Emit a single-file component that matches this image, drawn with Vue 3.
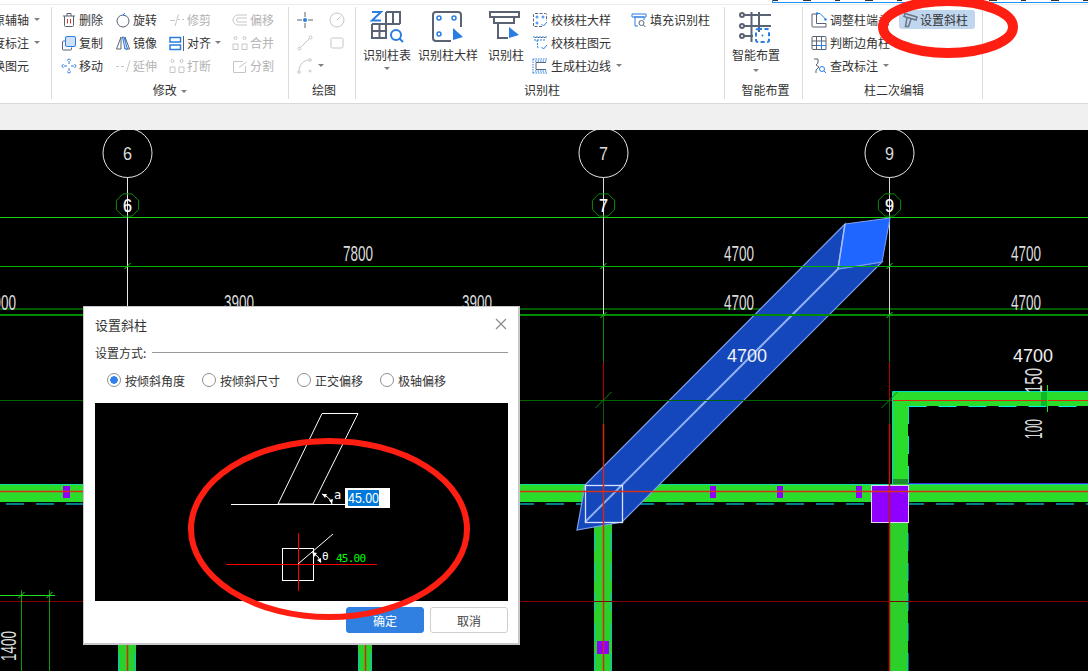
<template>
  <div class="app">
    <div class="top-strip"><div class="top-tabs"></div></div>

    <div class="ribbon">
      <section class="group g0">
        <div class="body rows cut">
          <div class="item"><span>原辅轴</span><i class="caret"></i></div>
          <div class="item"><span>度标注</span><i class="caret"></i></div>
          <div class="item"><span>换图元</span></div>
        </div>
      </section>

      <section class="group g1">
        <div class="body rows">
          <div class="item">
            <svg class="ic" viewBox="0 0 16 16"><path d="M2 4h12M6 4V1.500h4V4M3.500 4v9.500a1 1 0 0 0 1 1h7a1 1 0 0 0 1-1V4" /><path class="red" d="M6.500 7v4.500M9.500 7v4.500" /></svg>
            <span>删除</span>
          </div>
          <div class="item">
            <svg class="ic" viewBox="0 0 16 16"><circle cx="8" cy="9" r="6" /><path class="blue" d="M8 3l2-2M8 3l2.500 1" /></svg>
            <span>旋转</span>
          </div>
          <div class="item off">
            <svg class="ic" viewBox="0 0 16 16"><path d="M1 8.500h5M9 7.500h2M13 7.500h2M9.500 2.500L6 14" /></svg>
            <span>修剪</span>
          </div>
          <div class="item off">
            <svg class="ic" viewBox="0 0 16 16"><path d="M15 3H6a5 5 0 0 0 0 10h9M15 6H6.500a2 2 0 0 0 0 4H15" /></svg>
            <span>偏移</span>
          </div>

          <div class="item">
            <svg class="ic" viewBox="0 0 16 16"><path d="M4 6H2.500a1 1 0 0 0-1 1v7a1 1 0 0 0 1 1h7a1 1 0 0 0 1-1v-1.500" /><rect class="blue tint" x="4.500" y="1.500" width="10" height="10" rx="1.500" /></svg>
            <span>复制</span>
          </div>
          <div class="item">
            <svg class="ic" viewBox="0 0 16 16"><path d="M6 2L1.500 14h4.500zM10 2v12h4.500z" /><path class="blue tint" d="M7.500 2L10 14h2.500L9 2z" /></svg>
            <span>镜像</span>
          </div>
          <div class="item">
            <svg class="ic" viewBox="0 0 16 16"><path class="blue wide" d="M1 2.500h10.500v4.500H1zM1 10h10.500v4.500H1z" /><path d="M14.500 1v15" /></svg>
            <span>对齐</span><i class="caret"></i>
          </div>
          <div class="item off">
            <svg class="ic" viewBox="0 0 16 16"><circle cx="3.500" cy="3" r="1.500" /><circle cx="12.500" cy="3" r="1.500" /><path d="M1 14.500V9h5v5.500zM10 14.500V9h5v5.500z" /></svg>
            <span>合并</span>
          </div>

          <div class="item">
            <svg class="ic" viewBox="0 0 16 16"><path class="blue" d="M8 3v3M8 10v3M3 8h3M10 8h3M6 2.500L8 .8l2 1.700M6 13.500l2 1.700 2-1.700M2.500 6L.8 8l1.700 2M13.500 6L15.200 8l-1.700 2" /></svg>
            <span>移动</span>
          </div>
          <div class="item off">
            <svg class="ic" viewBox="0 0 16 16"><path d="M1 8.500h3M6 8.500h3M15 2.500L11.500 14" /></svg>
            <span>延伸</span>
          </div>
          <div class="item off">
            <svg class="ic" viewBox="0 0 16 16"><circle cx="3.500" cy="3" r="1.500" /><circle cx="12.500" cy="3" r="1.500" /><path d="M1 14.500V9h5v5.500zM10 14.500V9h5v5.500z" /></svg>
            <span>打断</span>
          </div>
          <div class="item off">
            <svg class="ic" viewBox="0 0 16 16"><path d="M11 3.500H1.500v11h12V8M7 9.500L14.500 4" /></svg>
            <span>分割</span>
          </div>
        </div>
        <div class="label">修改 <i class="caret"></i></div>
      </section>

      <section class="group g2">
        <div class="body rows">
          <div class="item">
            <svg class="ic" viewBox="0 0 16 16"><path d="M0 8h5M11 8h5M8 0v5M8 11v5" /><circle class="dot" cx="8" cy="8" r="2" /></svg>
          </div>
          <div class="item off">
            <svg class="ic" viewBox="0 0 16 16"><circle cx="8" cy="8" r="7" /><path d="M8 8l3.500-3.500" /></svg>
          </div>
          <div class="item off">
            <svg class="ic" viewBox="0 0 16 16"><circle cx="2.500" cy="13.500" r="1.500" /><circle cx="13.500" cy="2.500" r="1.500" /><path d="M3.500 12.500l9-9" /></svg>
          </div>
          <div class="item off">
            <svg class="ic" viewBox="0 0 16 16"><rect x="2" y="3" width="12" height="10" rx="1.500" /></svg>
          </div>
          <div class="item off">
            <svg class="ic" viewBox="0 0 16 16"><circle cx="2" cy="14" r="1.300" /><circle cx="13" cy="2" r="1.300" /><circle cx="13" cy="13" r="1" /><path d="M2 12.500C2.500 6 7 2.500 11.500 2" /></svg>
            <i class="caret"></i>
          </div>
        </div>
        <div class="label">绘图</div>
      </section>

      <section class="group g3">
        <div class="body big-row">
          <div class="big b1">
            <svg class="ic big-ic" viewBox="0 0 34 34"><path class="blue" d="M2 2h9L2 10.500h9" /><path d="M16 2h14v12M23 2v12M2 14h28M2 14v14h15M9.500 14v14M2 21h15M16 2v26" /><circle class="blue" cx="26" cy="25" r="5" /><path class="blue" d="M29.500 28.500L33 32" /></svg>
            <span>识别柱表</span>
            <i class="caret"></i>
          </div>
          <div class="big b2">
            <svg class="ic big-ic" viewBox="0 0 34 34"><path d="M20 31H5a3 3 0 0 1-3-3V5a3 3 0 0 1 3-3h22a3 3 0 0 1 3 3v12" /><g class="thin"><circle class="blue" cx="8" cy="8" r="2" /><circle class="blue" cx="23" cy="8" r="2" /><circle class="blue" cx="8" cy="24" r="2" /></g><path class="fill" d="M22 18l10 9-10 3z" /></svg>
            <span>识别柱大样</span>
          </div>
          <div class="big b3">
            <svg class="ic big-ic" viewBox="0 0 34 34"><path d="M1 2h29v5H1zM5 7v6h20V7M9 13v15h10" /><path class="fill" d="M20 17l10 8-10 3z" /></svg>
            <span>识别柱</span>
          </div>
          <div class="rows col3">
            <div class="item">
              <svg class="ic" viewBox="0 0 16 16"><path stroke-dasharray="3 1.500" d="M1.500 14V2.500a1 1 0 0 1 1-1h11a1 1 0 0 1 1 1V9M10 14.500H2.500" /><circle class="blue" cx="5" cy="5" r="1" /><circle class="blue" cx="11" cy="5" r="1" /><circle class="blue" cx="5" cy="11" r="1" /><path class="blue" d="M9.500 12l2 2L15 10" /></svg>
              <span>校核柱大样</span>
            </div>
            <div class="item">
              <svg class="ic" viewBox="0 0 16 16"><path class="blue" stroke-dasharray="2 1" d="M1 2h14M2 5h12M5 5l1 9" /><path d="M3 2.500h10" stroke-dasharray="1.500 1.500" /><path class="blue" d="M9.500 12l2 2L15 10" /></svg>
              <span>校核柱图元</span>
            </div>
            <div class="item">
              <svg class="ic" viewBox="0 0 16 16"><path class="blue" stroke-dasharray="1.500 1" d="M1 1h14M1 15h14M1 1v14M3 3h12M3 13h12" /><path d="M4 4.500h10M4 11.500h10M4 4.500v7" /></svg>
              <span>生成柱边线</span><i class="caret"></i>
            </div>
          </div>
          <div class="rows col4">
            <div class="item">
              <svg class="ic" viewBox="0 0 16 16"><path class="blue" d="M1 2h14v3H1zM3 5h10v3" /><path class="blue" d="M4 5v9h3" /><circle cx="10.500" cy="11" r="2.500" /><path d="M12.500 13l2 2" /></svg>
              <span>填充识别柱</span>
            </div>
          </div>
        </div>
        <div class="label">识别柱</div>
      </section>

      <section class="group g4">
        <div class="body smart">
          <svg class="ic big-ic" viewBox="0 0 34 34"><path d="M12.500 2v30M20 2v20M4 5h28M4 16h28M4 26h10" /><circle cx="3" cy="5" r="2" /><circle cx="3" cy="16" r="2" /><circle cx="3" cy="26" r="2" /><rect class="blue" stroke-dasharray="4 2.500" x="17" y="19" width="13" height="13" rx="2" /><circle class="dot" cx="23.500" cy="25.500" r="1" /></svg>
          <span>智能布置</span>
          <i class="caret"></i>
        </div>
        <div class="label">智能布置</div>
      </section>

      <section class="group g5">
        <div class="body rows">
          <div class="item">
            <svg class="ic" viewBox="0 0 16 16"><path d="M1 2h4.500v9.500H15V15H2a1 1 0 0 1-1-1z" /><path class="blue" d="M6 1.500h3L14.500 7" /><circle class="dot" cx="6" cy="1.500" r="1.200" /><circle class="dot" cx="14.500" cy="7.500" r="1.200" /></svg>
            <span>调整柱端头</span>
          </div>
          <div class="item on">
            <svg class="ic slant" viewBox="0 0 16 16"><path d="M2 1.500l12 3.500-1 3L1 4.500zM4 5.500L2.500 14.500h3L8 7" /></svg>
            <span>设置斜柱</span>
          </div>
          <div class="item">
            <svg class="ic" viewBox="0 0 16 16"><path d="M1 2.500a1 1 0 0 1 1-1h12a1 1 0 0 1 1 1v12H2a1 1 0 0 1-1-1zM1 6h14M1 10.500h14M5.500 1.500v13M10.500 1.500v13" /><path class="blue" d="M10.500 6v8.500M6 10.500h9" /></svg>
            <span>判断边角柱</span>
          </div>
          <div></div>
          <div class="item">
            <svg class="ic" viewBox="0 0 16 16"><path d="M3 1h4v4L5 7l3 2-3 3v3" /><circle class="blue" cx="11" cy="11" r="2.500" /><path class="blue" d="M13 13l2 2" /></svg>
            <span>查改标注</span><i class="caret"></i>
          </div>
        </div>
        <div class="label">柱二次编辑</div>
      </section>
    </div>

    <div class="band"></div>

    <div class="canvas">
      <svg class="plan" viewBox="0 130 1088 541" width="1088" height="541">
        <!-- grid behind the beams -->
        <line v-for="(l, i) in backLines" :key="'b' + i" :x1="l[0]" :y1="l[1]" :x2="l[2]" :y2="l[3]" :stroke="l[4]" :stroke-width="l[5]" shape-rendering="crispEdges" />

        <!-- walls -->
        <rect x="0" y="485" width="1088" height="17" fill="#2bdd2b" />
        <line x1="0" y1="484.500" x2="1088" y2="484.500" stroke="#10dca0" />
        <line x1="0" y1="504" x2="1088" y2="504" stroke="#007f8a" stroke-width="2" stroke-dasharray="18 12" stroke-dashoffset="-6" />
        <rect x="594" y="502" width="18" height="169" fill="#2bd02b" />
        <rect x="118" y="645" width="18" height="26" fill="#2bd02b" />
        <rect x="358" y="645" width="14" height="26" fill="#2bd02b" />
        <rect x="890" y="502" width="18" height="169" fill="#2bd02b" />
        <rect x="892" y="392" width="16" height="93" fill="#2bdd2b" />
        <rect x="892" y="392" width="196" height="14" fill="#2bdd2b" />
        <path d="M892.500 484V391.500H1088" fill="none" stroke="#00d8c8" />
        <line x1="908.500" y1="406.500" x2="1088" y2="406.500" stroke="#00f0f0" stroke-dasharray="18 12" />
        <line x1="908.500" y1="406" x2="908.500" y2="484" stroke="#00e0e0" stroke-dasharray="18 12" />
        <line x1="908" y1="483.500" x2="1088" y2="483.500" stroke="#3a30e0" />
        <rect x="893" y="479" width="15" height="5" fill="#1d8f2f" />
        <line v-for="x in wallEdges" :key="'e' + x" :x1="x" y1="503" :x2="x" y2="671" stroke="#00c8d8" stroke-width="1" stroke-dasharray="18 12" />
        <rect x="1041" y="392" width="7" height="14" fill="#12b82c" />

        <!-- columns -->
        <rect v-for="p in studs" :key="p[0] + '-' + p[1]" :x="p[0]" :y="p[1]" :width="p[2]" :height="p[3]" fill="#8f00ff" />
        <rect x="871.500" y="485.500" width="37" height="37" fill="#8f00ff" stroke="#e4d8f4" />

        <!-- inclined column -->
        <polygon points="845,224 585,485 577,530 622,522 882,262 838,269" fill="#1347bb" stroke="#7fa0ee" stroke-width="1.200" />
        <polygon points="845,224 890,218 882,262 838,269" fill="#1e66ff" stroke="#7ea0f5" />
        <line x1="838" y1="269" x2="585" y2="522" stroke="#8fb0f0" stroke-width="2" />
        <line x1="845" y1="224" x2="838" y2="269" stroke="#a5bcf7" stroke-width="1.500" />
        <rect x="585.500" y="485.500" width="37" height="37" fill="none" stroke="#d8e2fa" stroke-width="1.300" />

        <!-- red axis lines -->
        <line v-for="(l, i) in redLines" :key="'r' + i" :x1="l[0]" :y1="l[1]" :x2="l[2]" :y2="l[3]" :stroke="l[4]" :stroke-width="l[5]" />

        <line v-for="(l, i) in frontLines" :key="'f' + i" :x1="l[0]" :y1="l[1]" :x2="l[2]" :y2="l[3]" :stroke="l[4]" :stroke-width="l[5]" shape-rendering="crispEdges" />
        <line v-for="(t, i) in ticks" :key="'t' + i" :x1="t[0] - t[2]" :y1="t[1] + t[2]" :x2="t[0] + t[2]" :y2="t[1] - t[2]" :stroke="t[3]" />

        <!-- axis bubbles -->
        <g v-for="a in axes" :key="a.x">
          <circle :cx="a.x" cy="153" r="24.500" fill="#000" stroke="#e8e8e8" />
          <text class="cad" :x="a.x - 4.500" y="160" font-size="19" textLength="9" lengthAdjust="spacingAndGlyphs">{{ a.n }}</text>
          <polygon :points="octagon(a.x, 205, 12)" fill="none" stroke="#0b8a0b" />
          <text class="cad bold" :x="a.x - 4.500" y="212" font-size="19" textLength="9" lengthAdjust="spacingAndGlyphs">{{ a.n }}</text>
        </g>

        <!-- dimensions -->
        <text v-for="d in dims" :key="d[0] + '-' + d[1]" class="cad" :x="d[0]" :y="d[1]" font-size="22" textLength="30" lengthAdjust="spacingAndGlyphs">{{ d[2] }}</text>
        <text class="big-dim" x="727" y="362" font-size="19" textLength="40" lengthAdjust="spacingAndGlyphs">4700</text>
        <text class="big-dim" x="1013" y="362" font-size="19" textLength="40" lengthAdjust="spacingAndGlyphs">4700</text>
        <text class="cad" transform="translate(1042 393) rotate(-90)" font-size="24" textLength="25" lengthAdjust="spacingAndGlyphs">150</text>
        <text class="cad" transform="translate(1042 439) rotate(-90)" font-size="24" textLength="20" lengthAdjust="spacingAndGlyphs">100</text>
        <text class="cad" transform="translate(16 661) rotate(-90)" font-size="22" textLength="30" lengthAdjust="spacingAndGlyphs">1400</text>
      </svg>

      <div class="dialog">
        <div class="dlg-head">
          <span>设置斜柱</span>
          <svg class="close" viewBox="0 0 12 12"><path d="M1 1l10 10M11 1L1 11" /></svg>
        </div>
        <div class="legend"><span>设置方式:</span><i></i></div>
        <div class="radios">
          <label v-for="(r, i) in modes" :key="r" class="radio"><b :class="{ picked: i === 0 }"></b>{{ r }}</label>
        </div>
        <svg class="preview" viewBox="95 403 413 198" width="413" height="198">
          <path d="M322 413.500h36L313 504h-35zM231 504.500h114" fill="none" stroke="#fff" />
          <path d="M322 494q8 3 10 10" fill="none" stroke="#fff" />
          <path d="M322 494l5 0-2 4zM332 504l-3-4 4-1z" fill="#fff" />
          <text class="mono" x="334" y="499" font-size="12" fill="#fff">a</text>
          <rect x="345" y="488" width="45" height="20" fill="#fff" />
          <rect x="348" y="490" width="31" height="16" fill="#0078d7" />
          <text x="348" y="503" font-size="14" fill="#fff" class="inp" textLength="31" lengthAdjust="spacingAndGlyphs">45.00</text>

          <rect x="282.500" y="548.500" width="31" height="32" fill="none" stroke="#fff" />
          <line x1="226" y1="564.500" x2="377" y2="564.500" stroke="#ff0000" stroke-width="1" />
          <line x1="298.500" y1="533" x2="298.500" y2="591" stroke="#ff0000" stroke-width="1" />
          <path d="M298 564l35-30" stroke="#fff" fill="none" />
          <path d="M313 553q6 3 8 9" fill="none" stroke="#fff" />
          <path d="M312 552l5 1-3 4zM321 563l-4-3 4-2z" fill="#fff" />
          <text class="mono" x="322" y="560" font-size="11" fill="#fff">θ</text>
          <text class="mono" x="336" y="562" font-size="11" fill="#0f0" textLength="30">45.00</text>
        </svg>
        <div class="actions">
          <button class="btn primary">确定</button>
          <button class="btn">取消</button>
        </div>
      </div>
    </div>

    <svg class="marks" viewBox="0 0 1088 671" width="1088" height="671">
      <ellipse cx="948" cy="27" rx="65" ry="26" />
      <ellipse class="wide" cx="329" cy="529" rx="138" ry="88" />
    </svg>
  </div>
</template>

<script setup>
const modes = ['按倾斜角度', '按倾斜尺寸', '正交偏移', '极轴偏移']

const axes = [
  { x: 127.5, n: '6' },
  { x: 603.5, n: '7' },
  { x: 889.5, n: '9' }
]

const dims = [
  [343, 261, '7800'], [724, 261, '4700'], [1011, 261, '4700'],
  [-14, 310, '3900'], [224, 310, '3900'], [462, 310, '3900'],
  [724, 310, '4700'], [1011, 310, '4700']
]

const backLines = [
  [0, 217.5, 1088, 217.5, '#19d019', 1],
  [0, 309, 1088, 309, '#005a00', 2],
  [127.5, 177, 127.5, 315, '#e8e8e8', 1],
  [603.5, 177, 603.5, 315, '#d8d8d8', 1],
  [889.5, 177, 889.5, 315, '#d8d8d8', 1],
  [603.5, 315, 603.5, 362, '#0a8a0a', 1],
  [889.5, 315, 889.5, 362, '#0a8a0a', 1],
  [603.5, 400, 603.5, 424, '#0a5a0a', 1],
  [889.5, 400, 889.5, 424, '#0a5a0a', 1]
]

const frontLines = [
  [0, 266.5, 1088, 266.5, '#00b400', 1],
  [0, 315, 1088, 315, '#008c00', 2],
  [0, 400.5, 892, 400.5, '#006400', 1],
  [21.5, 590, 21.5, 671, '#0a9a0a', 1],
  [49.5, 590, 49.5, 671, '#0a9a0a', 1],
  [0, 595.5, 55, 595.5, '#1fe01f', 1],
  [1047.5, 385, 1047.5, 412, '#18e818', 1]
]

const redLines = [
  [603.5, 362, 603.5, 400, '#b00000', 1],
  [603.5, 424, 603.5, 671, '#d02a10', 1.5],
  [889.5, 362, 889.5, 400, '#b00000', 1],
  [889.5, 424, 889.5, 671, '#c01808', 1.5],
  [127.5, 645, 127.5, 671, '#d02a10', 1.5],
  [365.5, 645, 365.5, 671, '#d02a10', 1.5],
  [0, 491.5, 1088, 491.5, '#d83018', 1.5],
  [893, 400.5, 1088, 400.5, '#d83010', 1],
  [0, 601.5, 1088, 601.5, '#800000', 1]
]

const wallEdges = [594.5, 611.5, 889.5, 908, 118.5, 135.5, 358.5, 371.5]

const ticks = [
  [127.5, 266, 3, '#19e019'], [603.5, 266, 3, '#19e019'], [889.5, 266, 3, '#19e019'],
  [603.5, 315, 3, '#19e019'], [889.5, 315, 3, '#19e019'],
  [603.5, 400, 8, '#0a8a0a'], [889.5, 400, 8, '#0a8a0a'],
  [21.5, 595, 3, '#19e019'], [49.5, 595, 3, '#19e019']
]

const studs = [
  [63, 486, 7, 12], [710, 486, 6, 12], [777, 486, 6, 12], [856, 486, 6, 12],
  [597, 641, 12, 13]
]

const octagon = (cx, cy, r) => {
  const pts = []
  for (let i = 0; i < 8; i++) {
    const a = Math.PI / 8 + (i * Math.PI) / 4
    pts.push((cx + r * Math.cos(a)).toFixed(1) + ',' + (cy + r * Math.sin(a)).toFixed(1))
  }
  return pts.join(' ')
}
</script>

<style>
html, body {
  margin: 0;
  overflow: hidden;
  background: #000;
}
</style>

<style scoped>
.app {
  position: relative;
  display: flex;
  flex-direction: column;
  width: 1088px;
  height: 671px;
  overflow: hidden;
  background: #fff;
  color: #333;
  font-family: "Noto Sans CJK SC", "Liberation Sans", sans-serif;
  font-size: 12px;
}
.top-strip {
  height: 5px;
  flex: none;
  background: #fff;
  border-bottom: 1px solid #ececec;
  box-sizing: border-box;
}
.top-tabs {
  margin-left: 772px;
  height: 3px;
  box-sizing: border-box;
  border-left: 1px solid #1e90ff;
  border-bottom: 1px solid #1e90ff;
  background: repeating-linear-gradient(90deg, #333 0 5px, #fff 5px 30px, #333 30px 38px, #fff 38px 62px) 0 0 / 100% 1px no-repeat;
}
.ribbon {
  display: flex;
  height: 98px;
  flex: none;
  background: #fff;
  border-bottom: 1px solid #d9d9d9;
  box-sizing: content-box;
}
.group {
  display: flex;
  flex-direction: column;
  box-sizing: border-box;
  height: 92px;
  margin-top: 2px;
  border-right: 1px solid #dcdcdc;
}
.g0 { width: 52px; }
.g1 { width: 237px; }
.g2 { width: 67px; }
.g3 { width: 369px; }
.g4 { width: 78px; }
.g5 { width: 180px; }
.body {
  height: 76px;
  flex: none;
}
.label {
  height: 14px;
  line-height: 14px;
  text-align: center;
  white-space: nowrap;
}
.g2 .label,
.g3 .label,
.g4 .label {
  padding-left: 4px;
}
.g5 .label {
  padding-left: 3px;
}
.rows {
  display: grid;
  grid-auto-rows: 23px;
  padding-top: 1px;
  box-sizing: border-box;
}
.cut {
  margin-left: -7px;
  overflow: hidden;
  width: 58px;
}
.g1 .rows {
  grid-template-columns: 54px 54px 63px 1fr;
  padding-left: 9px;
}
.g2 .rows {
  grid-template-columns: 32px 1fr;
  padding-left: 8px;
}
.g5 .rows {
  grid-template-columns: 88px 1fr;
  padding-left: 8px;
}
.item {
  display: flex;
  align-items: center;
  gap: 3px;
  white-space: nowrap;
}
.g1 .item {
  gap: 2px;
}
.item.off {
  color: #b4b4b4;
}
.item.on {
  align-self: center;
  width: 76px;
  height: 19px;
  padding-left: 4px;
  box-sizing: border-box;
  background: #c0d6ee;
  border-radius: 3px;
  gap: 1px;
}
.caret {
  display: inline-block;
  width: 0;
  height: 0;
  margin-left: 2px;
  border-left: 3px solid transparent;
  border-right: 3px solid transparent;
  border-top: 3px solid #808080;
  vertical-align: middle;
}
.ic {
  width: 16px;
  height: 16px;
  flex: none;
  fill: none;
  stroke: #5a6373;
  stroke-width: 1;
}
.ic.slant {
  stroke: #6a7484;
  stroke-width: 1.5;
}
.off .ic {
  stroke: #c6c6c6;
}
.ic .blue {
  stroke: #2a7de1;
}
.ic .wide {
  stroke-width: 1.5;
}
.ic .tint {
  fill: #cfe1f9;
}
.ic .red {
  stroke: #e03a2a;
}
.ic .dot {
  fill: #2a7de1;
  stroke: none;
}
.ic .fill {
  fill: #2a7de1;
  stroke: none;
}
.big-ic {
  width: 34px;
  height: 34px;
  stroke-width: 2;
}
.big-ic .thin {
  stroke-width: 1.5;
}
.big-row {
  display: flex;
  padding-left: 6px;
}
.big {
  display: flex;
  flex-direction: column;
  align-items: center;
  padding-top: 3px;
  white-space: nowrap;
}
.big span {
  margin-top: 3px;
  line-height: 16px;
}
.big .caret {
  margin: 4px 0 0;
}
.b1 { width: 50px; }
.b2 { width: 62px; margin-left: 5px; }
.b3 { width: 40px; margin-left: 7px; }
.col3 {
  width: 99px;
  margin-left: 6px;
}
.smart {
  display: flex;
  flex-direction: column;
  align-items: center;
  box-sizing: border-box;
  width: 62px;
  padding-top: 3px;
  white-space: nowrap;
}
.smart span {
  margin-top: 3px;
  line-height: 16px;
}
.smart .caret {
  margin: 6px 0 0;
}
.band {
  height: 26px;
  flex: none;
  background: #f0f0f0;
}
.canvas {
  position: relative;
  flex: 1;
  background: #000;
  overflow: hidden;
}
.plan {
  display: block;
}
.cad {
  fill: #dcdcdc;
  font-family: "Liberation Sans", sans-serif;
}
.cad.bold {
  fill: #fff;
  stroke: #fff;
  stroke-width: 0.2;
}
.big-dim {
  fill: #f2f2f2;
  font-family: "Liberation Sans", sans-serif;
}
.dialog {
  position: absolute;
  left: 83px;
  top: 176px;
  width: 437px;
  height: 339px;
  box-sizing: border-box;
  padding: 0 10px 0 11px;
  background: #fff;
  border: 2px solid #c8c8c8;
  border-width: 1px 2px 2px 1px;
}
.dlg-head {
  display: flex;
  align-items: center;
  justify-content: space-between;
  height: 34px;
  padding-right: 1px;
  font-size: 13px;
}
.close {
  width: 12px;
  height: 12px;
  fill: none;
  stroke: #8a8a8a;
  stroke-width: 1.2;
}
.legend {
  display: flex;
  align-items: center;
  gap: 6px;
  height: 20px;
  margin-top: 1px;
}
.legend i {
  flex: 1;
  height: 1px;
  background: #999;
}
.radios {
  display: flex;
  height: 36px;
  align-items: center;
  padding-left: 12px;
}
.radio {
  display: flex;
  align-items: center;
  gap: 4px;
  margin-right: 17px;
  color: #333;
  white-space: nowrap;
}
.radio b {
  width: 12px;
  height: 12px;
  border: 1px solid #8f8f8f;
  border-radius: 50%;
  background: #fff;
  box-sizing: content-box;
}
.radio b.picked {
  background: radial-gradient(circle, #2f80e8 0 3.5px, #fff 4px);
}
.preview {
  display: block;
  margin-top: 5px;
  background: #000;
}
.mono {
  font-family: "DejaVu Sans Mono", "Liberation Mono", monospace;
}
.inp {
  font-family: "Liberation Sans", sans-serif;
}
.actions {
  display: flex;
  justify-content: flex-end;
  gap: 6px;
  margin-top: 6px;
}
.btn {
  width: 78px;
  height: 26px;
  padding: 0;
  border: 1px solid #cfcfcf;
  border-radius: 3px;
  background: #fff;
  color: #444;
  font-family: inherit;
  font-size: 12px;
}
.btn.primary {
  border-color: #2f80e0;
  background: #2f80e0;
  color: #fff;
}
.marks {
  position: absolute;
  left: 0;
  top: 0;
  pointer-events: none;
  fill: none;
  stroke: #ff1e12;
  stroke-width: 10;
}
.marks .wide {
  stroke-width: 6;
}
</style>
